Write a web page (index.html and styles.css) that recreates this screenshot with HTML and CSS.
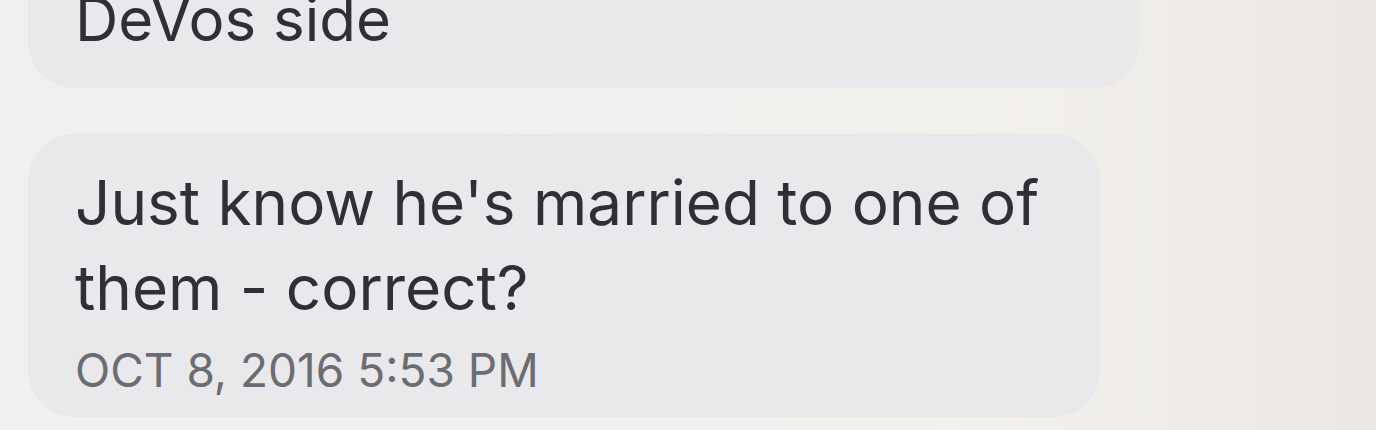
FILE: index.html
```html
<!DOCTYPE html>
<html lang="en">
<head>
  <meta charset="UTF-8">
  <title>Messages</title>
  <link rel="stylesheet" href="styles.css">
</head>
<body>
  <main class="thread">
    <div class="bubble bubble-prev">
      <p class="msg msg-prev">DeVos side</p>
    </div>
    <div class="bubble bubble-last">
      <p class="msg">Just know he's married to one of<br>them - correct?</p>
      <p class="stamp">OCT 8, 2016 5:53 PM</p>
    </div>
  </main>
</body>
</html>
```

FILE: styles.css
```css
body {
  margin: 0;
  height: 430px;
  overflow: hidden;
  font-family: Inter, "Liberation Sans", Arial, sans-serif;
  background: linear-gradient(to right, #f1f0ee 0%, #f3f1ee 70%, #ebe8e4 100%);
  color: #2e3036;
}

.thread {
  display: flex;
  flex-direction: column;
  align-items: flex-start;
  padding-left: 28px;
}

.bubble {
  background-color: #e9e8ea;
  border-radius: 46px;
  box-sizing: border-box;
  padding-left: 47px;
}

.bubble-prev {
  width: 1112px;
  margin-top: -80px;
  padding-top: 55px;
  padding-bottom: 25px;
}

.bubble-last {
  width: 1072px;
  margin-top: 46px;
  padding-top: 26px;
  padding-bottom: 17px;
}

.msg {
  margin: 0;
  font-size: 62px;
  line-height: 85px;
}

.msg-prev {
  font-size: 60px;
  line-height: 88px;
}

.stamp {
  margin: 10px 0 0;
  font-size: 46px;
  line-height: 60px;
  color: #6c6d72;
}
```
